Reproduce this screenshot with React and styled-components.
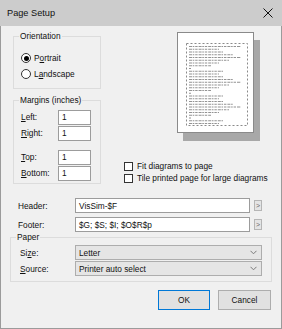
import React from 'react';
import styled, { createGlobalStyle } from 'styled-components';

const Global = createGlobalStyle`
  html, body { margin: 0; padding: 0; background: #ffffff; }
  body { font-family: "Liberation Sans", Arial, sans-serif; font-size: 8.3px; color: #111; }
  * { box-sizing: border-box; }
`;

const Window = styled.div`
  width: 282px;
  height: 329px;
  border: 1px solid #9b9b9b;
  border-top: none;
  background: #f0f0f0;
  display: flex;
  flex-direction: column;
`;

const TitleBar = styled.div`
  height: 26px;
  margin: 0 -1px;
  background: #cccccc;
  display: flex;
  align-items: center;
  justify-content: space-between;
  padding: 0 9px 0 7px;
  font-size: 9.2px;
`;

const Body = styled.div`
  display: flex;
  flex-direction: column;
  padding-top: 5px;
`;

const TopSection = styled.div`
  display: flex;
  height: 153px;
`;

const LeftCol = styled.div`
  margin-left: 12px;
  width: 88px;
  display: flex;
  flex-direction: column;
  gap: 6px;
`;

const Group = styled.fieldset`
  margin: 0;
  border: 1px solid #dcdcdc;
  padding: ${p => p.$pad};
  min-width: 0;
  ${p => p.$ml ? `margin-left: ${p.$ml}px;` : ''}
  ${p => p.$w ? `width: ${p.$w}px;` : ''}
`;

const Legend = styled.legend`
  padding: 0 1px;
  margin-left: ${p => p.$ml}px;
  line-height: 11px;
`;

const RadioRow = styled.label`
  display: flex;
  align-items: center;
  height: 16px;
  gap: 3px;
`;

const Radio = styled.span`
  width: 10px;
  height: 10px;
  border-radius: 50%;
  border: 1px solid #333;
  background: #fff;
  display: flex;
  align-items: center;
  justify-content: center;
  &::after {
    content: '';
    width: 5px;
    height: 5px;
    border-radius: 50%;
    background: ${p => (p.$checked ? '#000' : 'transparent')};
  }
`;

const MarginRow = styled.div`
  display: flex;
  align-items: center;
  height: 16px;
  margin-top: ${p => p.$gap || 0}px;
`;

const FieldLabel = styled.span`
  width: ${p => p.$w}px;
  flex: none;
`;

const TextBox = styled.div`
  width: ${p => p.$w}px;
  height: 15px;
  border: 1px solid #9c9c9c;
  background: #fff;
  display: flex;
  align-items: center;
  padding-left: 3px;
  white-space: nowrap;
  overflow: hidden;
`;

const RightCol = styled.div`
  margin-left: 23px;
  display: flex;
  flex-direction: column;
`;

const Preview = styled.div`
  margin-left: 53px;
  margin-top: 1px;
  width: 77px;
  height: 101px;
  background: #fff;
  border: 1px solid #8a8a8a;
  box-shadow: 6px 8px 0 0 #a8a8a8;
`;

const CheckList = styled.div`
  margin-top: 27px;
  display: flex;
  flex-direction: column;
`;

const CheckRow = styled.label`
  display: flex;
  align-items: center;
  height: 12px;
  gap: 4px;
  white-space: nowrap;
`;

const CheckBox = styled.span`
  width: 9px;
  height: 9px;
  border: 1px solid #333;
  background: #fff;
  flex: none;
`;

const FieldRow = styled.div`
  display: flex;
  align-items: center;
  height: 15px;
  margin-top: ${p => p.$mt}px;
  padding-left: 17px;
`;

const MoreButton = styled.div`
  margin-left: 4px;
  width: 8px;
  height: 11px;
  border: 1px solid #b5b5b5;
  background: #e4e4e4;
  color: #666;
  font-size: 7px;
  display: flex;
  align-items: center;
  justify-content: center;
`;

const PaperRow = styled.div`
  display: flex;
  align-items: center;
  height: 15px;
  margin-top: ${p => p.$mt || 0}px;
`;

const Select = styled.div`
  width: 187px;
  height: 15px;
  border: 1px solid #adadad;
  background: #e5e5e5;
  display: flex;
  align-items: center;
  justify-content: space-between;
  padding: 0 4px 0 3px;
`;

const ButtonRow = styled.div`
  display: flex;
  justify-content: flex-end;
  gap: 8px;
  margin-top: 8px;
  padding-right: 10px;
`;

const Button = styled.div`
  width: ${p => p.$w}px;
  height: 20px;
  border: 1px solid ${p => (p.$primary ? '#0078d7' : '#adadad')};
  background: #e1e1e1;
  display: flex;
  align-items: center;
  justify-content: center;
`;

const Chevron = () => (
  <svg width="7" height="5" viewBox="0 0 7 5">
    <path d="M0.5 0.8 L3.5 3.8 L6.5 0.8" fill="none" stroke="#7a7a7a" strokeWidth="1" />
  </svg>
);

const CloseIcon = () => (
  <svg width="10" height="10" viewBox="0 0 10 10">
    <path d="M0.5 0.5 L9.5 9.5 M9.5 0.5 L0.5 9.5" stroke="#111" strokeWidth="1" />
  </svg>
);

const lineWidths = [52, 30, 34, 44, 52, 40, 30, 22, 2, 34, 30, 34, 44, 52, 40, 30, 22, 2, 34, 30, 34, 44, 52, 40, 30, 22, 2, 34, 30];

const PageDrawing = () => (
  <svg width="75" height="99" viewBox="0 0 75 99">
    <rect x="8.5" y="10.5" width="61" height="82" fill="none" stroke="#8a8a8a" strokeWidth="1" strokeDasharray="2 2" />
    {lineWidths.map((w, i) => (
      <line
        key={i}
        x1="11"
        x2={11 + w}
        y1={13.5 + i * 2.75}
        y2={13.5 + i * 2.75}
        stroke="#6f6f6f"
        strokeWidth="1.1"
        strokeDasharray="3 0.7 1.6 0.9 2.4 1"
        opacity="0.75"
      />
    ))}
  </svg>
);

export default function App() {
  return (
    <>
      <Global />
      <Window>
        <TitleBar>
          <span>Page Setup</span>
          <CloseIcon />
        </TitleBar>
        <Body>
          <TopSection>
            <LeftCol>
              <Group $pad="8px 0 6px 7px">
                <Legend $ml={-2}>Orientation</Legend>
                <RadioRow>
                  <Radio $checked />
                  <span>P<u>o</u>rtrait</span>
                </RadioRow>
                <RadioRow>
                  <Radio />
                  <span>L<u>a</u>ndscape</span>
                </RadioRow>
              </Group>
              <Group $pad="3px 0 2px 7px">
                <Legend $ml={-2}>Margins (inches)</Legend>
                <MarginRow>
                  <FieldLabel $w={37}><u>L</u>eft:</FieldLabel>
                  <TextBox $w={33}>1</TextBox>
                </MarginRow>
                <MarginRow>
                  <FieldLabel $w={37}><u>R</u>ight:</FieldLabel>
                  <TextBox $w={33}>1</TextBox>
                </MarginRow>
                <MarginRow $gap={8}>
                  <FieldLabel $w={37}><u>T</u>op:</FieldLabel>
                  <TextBox $w={33}>1</TextBox>
                </MarginRow>
                <MarginRow>
                  <FieldLabel $w={37}><u>B</u>ottom:</FieldLabel>
                  <TextBox $w={33}>1</TextBox>
                </MarginRow>
              </Group>
            </LeftCol>
            <RightCol>
              <Preview>
                <PageDrawing />
              </Preview>
              <CheckList>
                <CheckRow>
                  <CheckBox />
                  <span>Fit diagrams to page</span>
                </CheckRow>
                <CheckRow>
                  <CheckBox />
                  <span>Tile printed page for large diagrams</span>
                </CheckRow>
              </CheckList>
            </RightCol>
          </TopSection>
          <FieldRow $mt={14}>
            <FieldLabel $w={57}>Header:</FieldLabel>
            <TextBox $w={175}>VisSim-$F</TextBox>
            <MoreButton>&gt;</MoreButton>
          </FieldRow>
          <FieldRow $mt={4}>
            <FieldLabel $w={57}>Footer:</FieldLabel>
            <TextBox $w={175}>$G; $S; $I; $O$R$p</TextBox>
            <MoreButton>&gt;</MoreButton>
          </FieldRow>
          <Group $pad="2px 0 5px 9px" $ml={9} $w={262}>
            <Legend $ml={-4}>Paper</Legend>
            <PaperRow>
              <FieldLabel $w={55}>Si<u>z</u>e:</FieldLabel>
              <Select>
                <span>Letter</span>
                <Chevron />
              </Select>
            </PaperRow>
            <PaperRow $mt={1}>
              <FieldLabel $w={55}><u>S</u>ource:</FieldLabel>
              <Select>
                <span>Printer auto select</span>
                <Chevron />
              </Select>
            </PaperRow>
          </Group>
          <ButtonRow>
            <Button $w={52} $primary>OK</Button>
            <Button $w={53}>Cancel</Button>
          </ButtonRow>
        </Body>
      </Window>
    </>
  );
}
